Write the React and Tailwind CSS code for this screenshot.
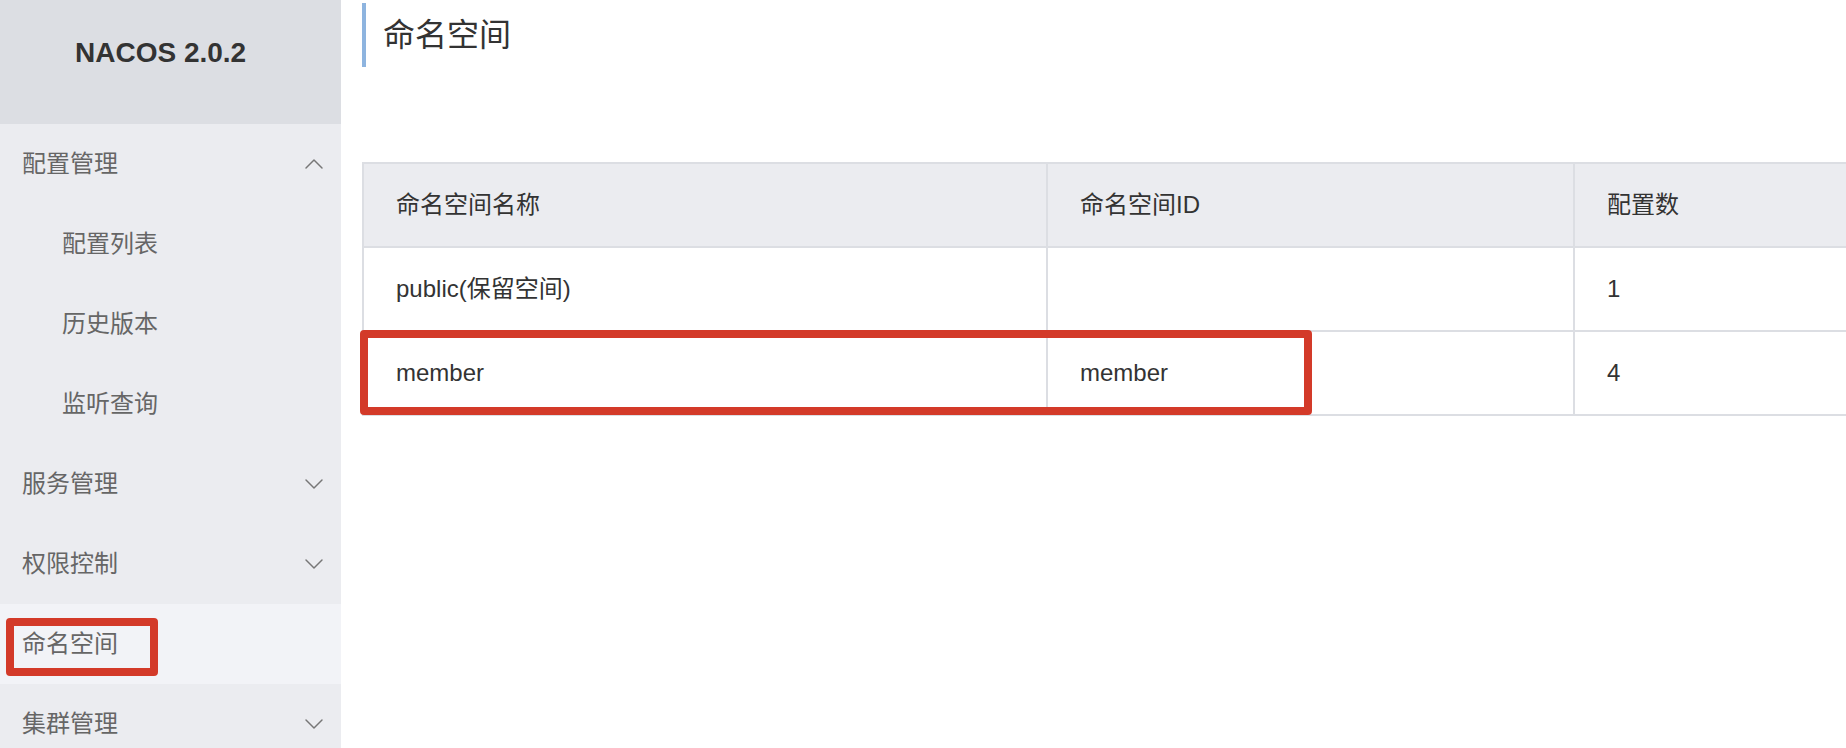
import { ChevronDown, ChevronUp } from "lucide-react";

const menu = [
  { label: "配置管理", open: true },
  { label: "配置列表", sub: true },
  { label: "历史版本", sub: true },
  { label: "监听查询", sub: true },
  { label: "服务管理", closed: true },
  { label: "权限控制", closed: true },
  { label: "命名空间", active: true },
  { label: "集群管理", closed: true },
];

const rows = [
  { name: "public(保留空间)", id: "", count: "1" },
  { name: "member", id: "member", count: "4" },
];

const App = () => {
  return (
    <div
      className="flex h-screen w-full overflow-hidden bg-white"
      style={{ fontFamily: '"Liberation Sans", "Noto Sans CJK SC", sans-serif' }}
    >
      {/* SIDEBAR */}
      <aside className="w-[341px] shrink-0 h-full overflow-hidden bg-[#ebecf0]">
        <div className="h-[124px] bg-[#dcdee3] flex items-center pl-[75px] pb-[18px]">
          <span className="text-[28px] font-bold text-[#333]">NACOS 2.0.2</span>
        </div>

        {menu.map(item => (
          <div
            key={item.label}
            className={`relative h-[80px] flex items-center justify-between text-[24px] text-[#666] ${
              item.sub ? "pl-[62px]" : "pl-[22px]"
            } pr-[11px] ${item.active ? "bg-[#f2f3f7] text-[#333]" : ""}`}
          >
            <span>{item.label}</span>
            {item.open && <ChevronUp size={32} strokeWidth={1.1} className="text-[#777]" />}
            {item.closed && <ChevronDown size={32} strokeWidth={1.1} className="text-[#777]" />}
            {item.active && (
              <div className="absolute left-[6px] top-[14px] w-[152px] h-[58px] border-[8px] border-[#d33a29] rounded-[4px]" />
            )}
          </div>
        ))}
      </aside>

      {/* MAIN */}
      <main className="flex-1 overflow-hidden pl-[21px] pt-[3px]">
        <div className="h-[64px] border-l-[4px] border-[#8eb4df] pl-[17px] flex items-start pt-[12px]">
          <h1 className="text-[32px] leading-[40px] text-[#333]">命名空间</h1>
        </div>

        <div className="relative mt-[95px] w-[1500px] border-t-2 border-l-2 border-[#dcdee3] text-[24px] text-[#333]">
          <div className="grid grid-cols-[684px_527px_289px] h-[84px] bg-[#ebecf0] border-b-2 border-[#dcdee3]">
            <div className="flex items-center pl-[32px] border-r-2 border-[#dcdee3]">命名空间名称</div>
            <div className="flex items-center pl-[32px] border-r-2 border-[#dcdee3]">命名空间ID</div>
            <div className="flex items-center pl-[32px]">配置数</div>
          </div>

          {rows.map(row => (
            <div
              key={row.name}
              className="grid grid-cols-[684px_527px_289px] h-[84px] border-b-2 border-[#dcdee3]"
            >
              <div className="flex items-center pl-[32px] border-r-2 border-[#dcdee3]">{row.name}</div>
              <div className="flex items-center pl-[32px] border-r-2 border-[#dcdee3]">{row.id}</div>
              <div className="flex items-center pl-[32px]">{row.count}</div>
            </div>
          ))}

          <div className="absolute left-[-4px] top-[166px] w-[952px] h-[85px] border-[8px] border-[#d33a29] rounded-[4px]" />
        </div>
      </main>
    </div>
  );
};

export default App;
